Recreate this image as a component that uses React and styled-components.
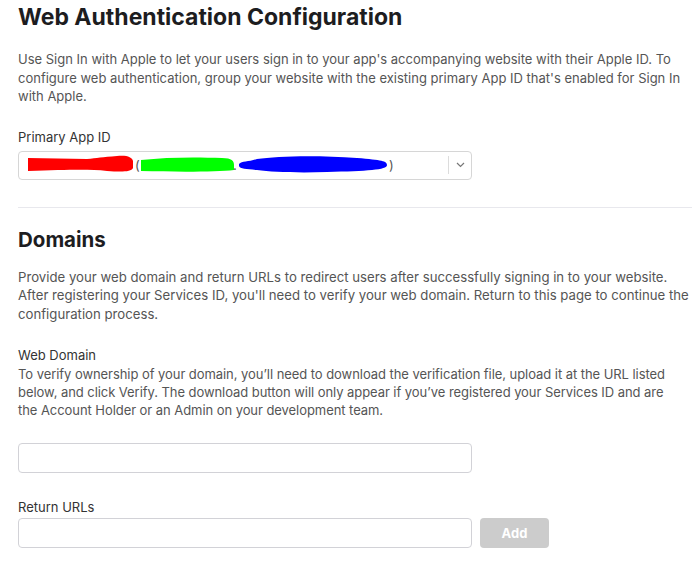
import React from "react";
import styled, { createGlobalStyle } from "styled-components";

const Global = createGlobalStyle`
  html, body { margin: 0; padding: 0; background: #fff; }
  body { font-family: Inter, "Noto Sans", sans-serif; color: #333; -webkit-font-smoothing: antialiased; }
`;

const Page = styled.div`
  padding: 0 0 0 18px;
  display: flex;
  flex-direction: column;
`;

const Section = styled.section`
  display: flex;
  flex-direction: column;
  width: 674px;
`;

const Title = styled.h1`
  margin: 3px 0 0;
  font-size: 23px;
  line-height: 28px;
  font-weight: 700;
  color: #1d1d1f;
`;

const SubTitle = styled.h2`
  margin: 0;
  font-size: 20.5px;
  line-height: 26px;
  font-weight: 700;
  color: #1d1d1f;
`;

const Para = styled.p`
  margin: ${(p) => p.$mt || 0}px 0 0;
  max-width: ${(p) => p.$w || 674}px;
  font-size: ${(p) => p.$size || 13}px;
  letter-spacing: ${(p) => p.$ls || 0}px;
  line-height: ${(p) => p.$lh || 18.5}px;
  color: #555;
`;

const Label = styled.div`
  margin-top: ${(p) => p.$mt || 0}px;
  font-size: 13px;
  line-height: 18px;
  color: #333;
`;

const Field = styled.div`
  margin-top: ${(p) => p.$mt || 0}px;
  display: flex;
  gap: 8px;
`;

const Input = styled.input`
  box-sizing: border-box;
  width: 454px;
  height: 30px;
  border: 1px solid #d2d2d7;
  border-radius: 4px;
  padding: 0 10px;
  font: inherit;
  background: #fff;
  outline: none;
`;

const Select = styled.div`
  box-sizing: border-box;
  width: 454px;
  height: 29px;
  border: 1px solid #d6d6d6;
  border-radius: 4px;
  display: flex;
  align-items: center;
  padding-left: 8px;
  font-size: 13px;
  color: #555;
`;

const SelectValue = styled.div`
  flex: 1;
  display: flex;
  align-items: center;
  height: 100%;
`;

const Chevron = styled.div`
  width: 22px;
  height: 18px;
  border-left: 1px solid #dcdcdc;
  display: flex;
  align-items: center;
  justify-content: center;
`;

const Divider = styled.hr`
  margin: 27px 0 19px;
  border: 0;
  border-top: 1px solid #e8e8ed;
`;

const AddButton = styled.button`
  width: 69px;
  height: 30px;
  border: 0;
  border-radius: 4px;
  background: #cccccc;
  color: #fff;
  font: inherit;
  font-size: 13px;
  font-weight: 700;
`;

const Redacted = () => (
  <svg width="380" height="20" viewBox="0 0 380 20">
    <path d="M1 3 L60 4 C70 3 75 2 90 1 C100 0 105 2 106 6 L106 13 C104 17 95 17 80 16 C60 14 40 15 1 16 Z" fill="#ff0000" />
    <text x="108" y="15" fontSize="13" fill="#555" fontFamily="Inter, sans-serif">(</text>
    <path d="M114 5 C140 2 170 2 195 3 C205 3 207 6 207 10 L207 15 C190 17 150 17 114 16 Z" fill="#00ff00" />
    <text x="206" y="15" fontSize="13" fill="#555" fontFamily="Inter, sans-serif">.</text>
    <path d="M212 9 C215 6 222 7 230 4 C250 1 290 0 330 3 C355 5 360 6 360 10 C360 15 340 16 300 17 C270 18 245 17 230 15 C220 14 213 14 212 11 Z" fill="#0000ff" />
    <text x="362" y="15" fontSize="13" fill="#555" fontFamily="Inter, sans-serif">)</text>
  </svg>
);

export default function App() {
  return (
    <>
      <Global />
      <Page>
        <Section>
          <Title>Web Authentication Configuration</Title>
          <Para $mt={19} $w={664}>
            Use Sign In with Apple to let your users sign in to your app's accompanying website with their Apple ID. To
            configure web authentication, group your website with the existing primary App ID that's enabled for Sign In
            with Apple.
          </Para>
          <Label $mt={22}>Primary App ID</Label>
          <Field $mt={5}>
            <Select>
              <SelectValue>
                <Redacted />
              </SelectValue>
              <Chevron>
                <svg width="9" height="6" viewBox="0 0 9 6">
                  <path d="M1 1 L4.5 4.5 L8 1" fill="none" stroke="#777" strokeWidth="1.2" />
                </svg>
              </Chevron>
            </Select>
          </Field>
        </Section>
        <Divider />
        <Section>
          <SubTitle>Domains</SubTitle>
          <Para $mt={15} $size={13.2}>
            Provide your web domain and return URLs to redirect users after successfully signing in to your website.
            After registering your Services ID, you'll need to verify your web domain. Return to this page to continue
            the configuration process.
          </Para>
          <Label $mt={23}>Web Domain</Label>
          <Para $mt={1} $lh={18} $ls={-0.06} $w={662}>
            To verify ownership of your domain, you’ll need to download the verification file, upload it at the URL
            listed below, and click Verify. The download button will only appear if you’ve registered your Services ID
            and are the Account Holder or an Admin on your development team.
          </Para>
          <Field $mt={24}>
            <Input />
          </Field>
          <Label $mt={25}>Return URLs</Label>
          <Field $mt={2}>
            <Input />
            <AddButton>Add</AddButton>
          </Field>
        </Section>
      </Page>
    </>
  );
}
